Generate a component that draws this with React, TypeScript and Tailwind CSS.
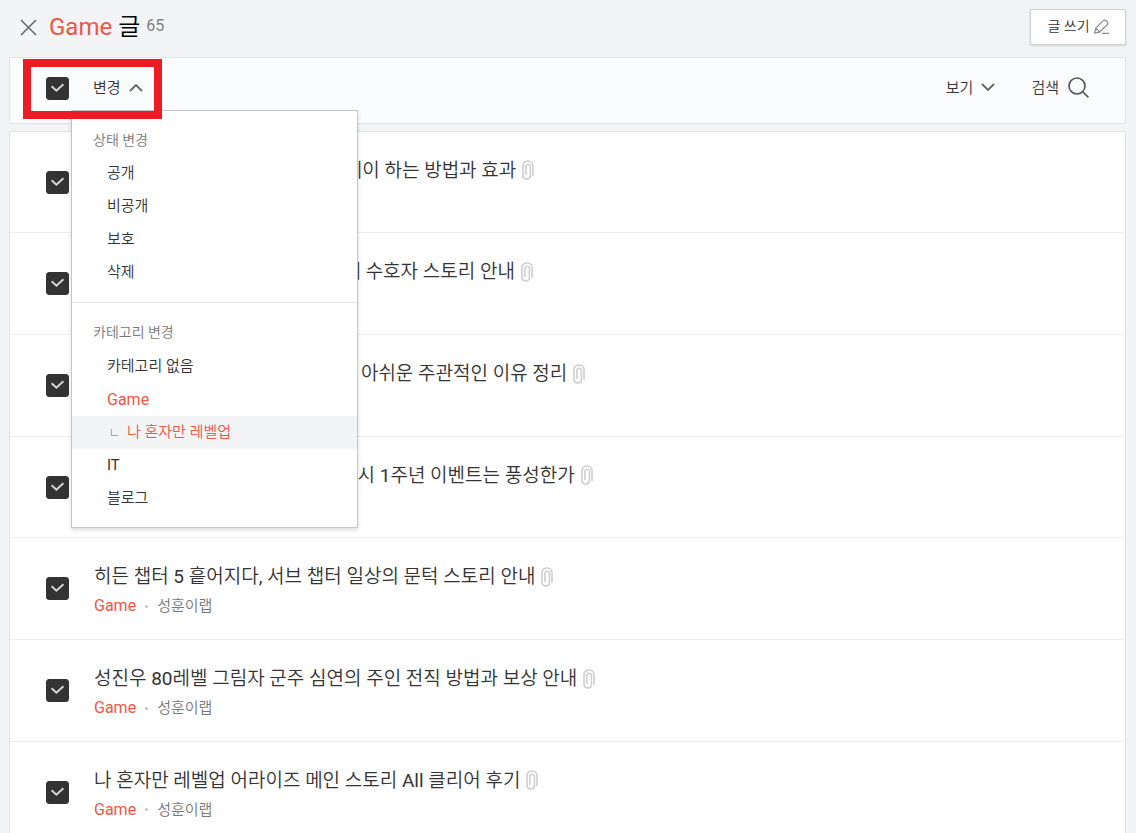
import { useState } from "react";

const posts = [
  { title: "나 혼자만 레벨업 어라이즈 더 플레이 하는 방법과 효과" },
  { title: "어라이즈업데이트 새로운챕터공개 수호자 스토리 안내" },
  { title: "나혼자만레벨업어라이즈리뷰조금 아쉬운 주관적인 이유 정리" },
  { title: "나 혼자만 레벨업 어라이즈 벌써출시 1주년 이벤트는 풍성한가" },
  { title: "히든 챕터 5 흩어지다, 서브 챕터 일상의 문턱 스토리 안내" },
  { title: "성진우 80레벨 그림자 군주 심연의 주인 전직 방법과 보상 안내" },
  { title: "나 혼자만 레벨업 어라이즈 메인 스토리 All 클리어 후기" },
];

const statuses = ["공개", "비공개", "보호", "삭제"];

const categories = [
  { name: "카테고리 없음" },
  { name: "Game", active: true },
  { name: "나 혼자만 레벨업", active: true, child: true },
  { name: "IT" },
  { name: "블로그" },
];

function CheckBox({ label }: { label: string }) {
  return (
    <span className="relative block size-[23px] shrink-0">
      <input
        type="checkbox"
        defaultChecked
        aria-label={label}
        className="peer block size-[23px] appearance-none rounded-[3px] border border-[#c8c8c8] bg-white checked:border-[#333] checked:bg-[#333]"
      />
      <svg
        viewBox="0 0 23 23"
        className="pointer-events-none absolute inset-0 hidden size-[23px] peer-checked:block"
        fill="none"
        stroke="#d8d8d8"
        strokeWidth="1.9"
      >
        <path d="M5.6 9.2 L10.4 13.8 L17.4 7.2" />
      </svg>
    </span>
  );
}

function Clip() {
  return (
    <svg
      viewBox="0 0 12 21"
      className="h-[21px] w-3 shrink-0"
      fill="none"
      stroke="#cfcfcf"
      strokeWidth="1.6"
      strokeLinecap="round"
      role="img"
      aria-label="첨부"
    >
      <path d="M11 15.5 V5.6 A4.6 4.6 0 0 0 6.4 1 H5.6 A4.6 4.6 0 0 0 1 5.6 V16 A3.9 3.9 0 0 0 8.4 16.6 V6 A2.3 2.3 0 0 0 3.9 6 V14.4" />
    </svg>
  );
}

export default function App() {
  const [open, setOpen] = useState(true);

  return (
    <div className="min-h-screen bg-[#f3f4f6] pr-[10px] pl-[9px] font-['Roboto','Noto_Sans_CJK_KR_DemiLight','Noto_Sans_CJK_KR',sans-serif] text-[#333]">
      <header className="flex h-[57px] items-start justify-between pt-[9px]">
        <div className="flex items-center pl-[11px]">
          <button type="button" aria-label="닫기" className="mr-3 block">
            <svg viewBox="0 0 17 17" className="size-[17px]" fill="none" stroke="#6a6a6a" strokeWidth="1.6">
              <path d="M1 1 L16 16 M16 1 L1 16" />
            </svg>
          </button>
          <h1 className="text-2xl leading-9 font-normal text-black">
            <span className="text-[#ef5646]">Game</span> 글
          </h1>
          <span className="mb-[2px] ml-[6px] text-base leading-8 text-[#808080]">65</span>
        </div>
        <a
          href="#write"
          className="flex h-9 w-24 items-center justify-center gap-1 border border-[#cfd1d4] bg-white pb-[2px] text-sm text-[#333] shadow-[0_1px_2px_rgba(0,0,0,0.12)]"
        >
          글 쓰기
          <svg viewBox="0 0 15 15" className="size-[15px]" fill="none" stroke="#8c8c8c" strokeWidth="1.2">
            <path d="M0.8 14 L1.6 9.4 L9.2 1.6 Q10.6 0.4 12.2 1.8 L13.4 3 Q14.4 4.4 13.2 5.8 L5.4 13.2 Z M2 9.2 L5.8 13 M8 14.3 H15" />
          </svg>
        </a>
      </header>

      <div className="relative flex h-[67px] items-center justify-between border border-[#e0e2e6] bg-[#fbfcfe] pr-9 pb-1 pl-9">
        <div className="flex items-center">
          <CheckBox label="전체 선택" />
          <button
            type="button"
            aria-expanded={open}
            onClick={() => setOpen(!open)}
            className="ml-6 flex items-center gap-2 pb-[2px] text-[15px] leading-6"
          >
            변경
            <svg viewBox="0 0 14 9" className="h-[9px] w-[14px]" fill="none" stroke="#666" strokeWidth="1.8">
              <path d="M1 8 L7 2 L13 8" />
            </svg>
          </button>
        </div>
        <div className="flex items-center gap-9 pb-[2px]">
          <button type="button" className="flex items-center gap-2 text-[15px] leading-6">
            보기
            <svg viewBox="0 0 14 9" className="h-[9px] w-[14px]" fill="none" stroke="#666" strokeWidth="1.8">
              <path d="M1 1 L7 7 L13 1" />
            </svg>
          </button>
          <button type="button" className="flex items-center gap-[9px] text-[15px] leading-6">
            검색
            <svg viewBox="0 0 21 21" className="size-[21px]" fill="none" stroke="#555" strokeWidth="1.6">
              <circle cx="9" cy="9" r="8" />
              <path d="M14.8 14.8 L20.4 20.4" />
            </svg>
          </button>
        </div>

        {open && (
          <div className="absolute top-[52px] left-[61px] z-10 w-[287px] border border-[#c4c6ca] bg-white shadow-[0_2px_4px_rgba(0,0,0,0.14)]">
            <section className="border-b border-[#e4e6e9] pt-[17px] pb-[13px]">
              <h2 className="mb-[5px] px-[21px] text-sm leading-6 text-[#777]">상태 변경</h2>
              <ul>
                {statuses.map((name) => (
                  <li key={name}>
                    <button type="button" className="block h-[33px] w-full px-[35px] text-left text-[15px]">
                      {name}
                    </button>
                  </li>
                ))}
              </ul>
            </section>
            <section className="pt-[17px] pb-3">
              <h2 className="mb-[6px] px-[21px] text-sm leading-6 text-[#777]">카테고리 변경</h2>
              <ul>
                {categories.map((c) => (
                  <li key={c.name}>
                    <button
                      type="button"
                      className={
                        "flex h-[33px] w-full items-center px-[35px] text-left " +
                        (c.name === "Game" ? "text-base " : "text-[15px] ") +
                        (c.child ? "bg-[#f3f4f6] " : "") +
                        (c.active ? "text-[#ef5646]" : "")
                      }
                    >
                      {c.child && <span className="mr-[9px] ml-1 block size-[7px] border-b border-l border-[#a8a8a8]" />}
                      {c.name}
                    </button>
                  </li>
                ))}
              </ul>
            </section>
          </div>
        )}
        <div className="pointer-events-none absolute top-[1px] left-[13px] z-20 h-[60px] w-[139px] border-8 border-[#ed1c24]" />
      </div>

      <ul className="mt-[7px] border border-[#e0e2e6] bg-white">
        {posts.map((post) => (
          <li
            key={post.title}
            className="flex h-[102px] items-center border-b border-[#eceef1] pl-9 nth-[3n+1]:h-[101px]"
          >
            <CheckBox label={post.title} />
            <div className="ml-[25px] pt-1">
              <div className="flex items-center gap-[6px]">
                <a href="#post" className="text-[19px] leading-7">
                  {post.title}
                </a>
                <Clip />
              </div>
              <div className="flex items-center pt-[3px] text-[15px] leading-6 text-[#777]">
                <a href="#category" className="text-base leading-6 text-[#ef5646]">
                  Game
                </a>
                <span className="mx-[9px] block size-[3px] rounded-full bg-[#c4c4c4]" />
                <span>성훈이랩</span>
              </div>
            </div>
          </li>
        ))}
      </ul>
    </div>
  );
}
